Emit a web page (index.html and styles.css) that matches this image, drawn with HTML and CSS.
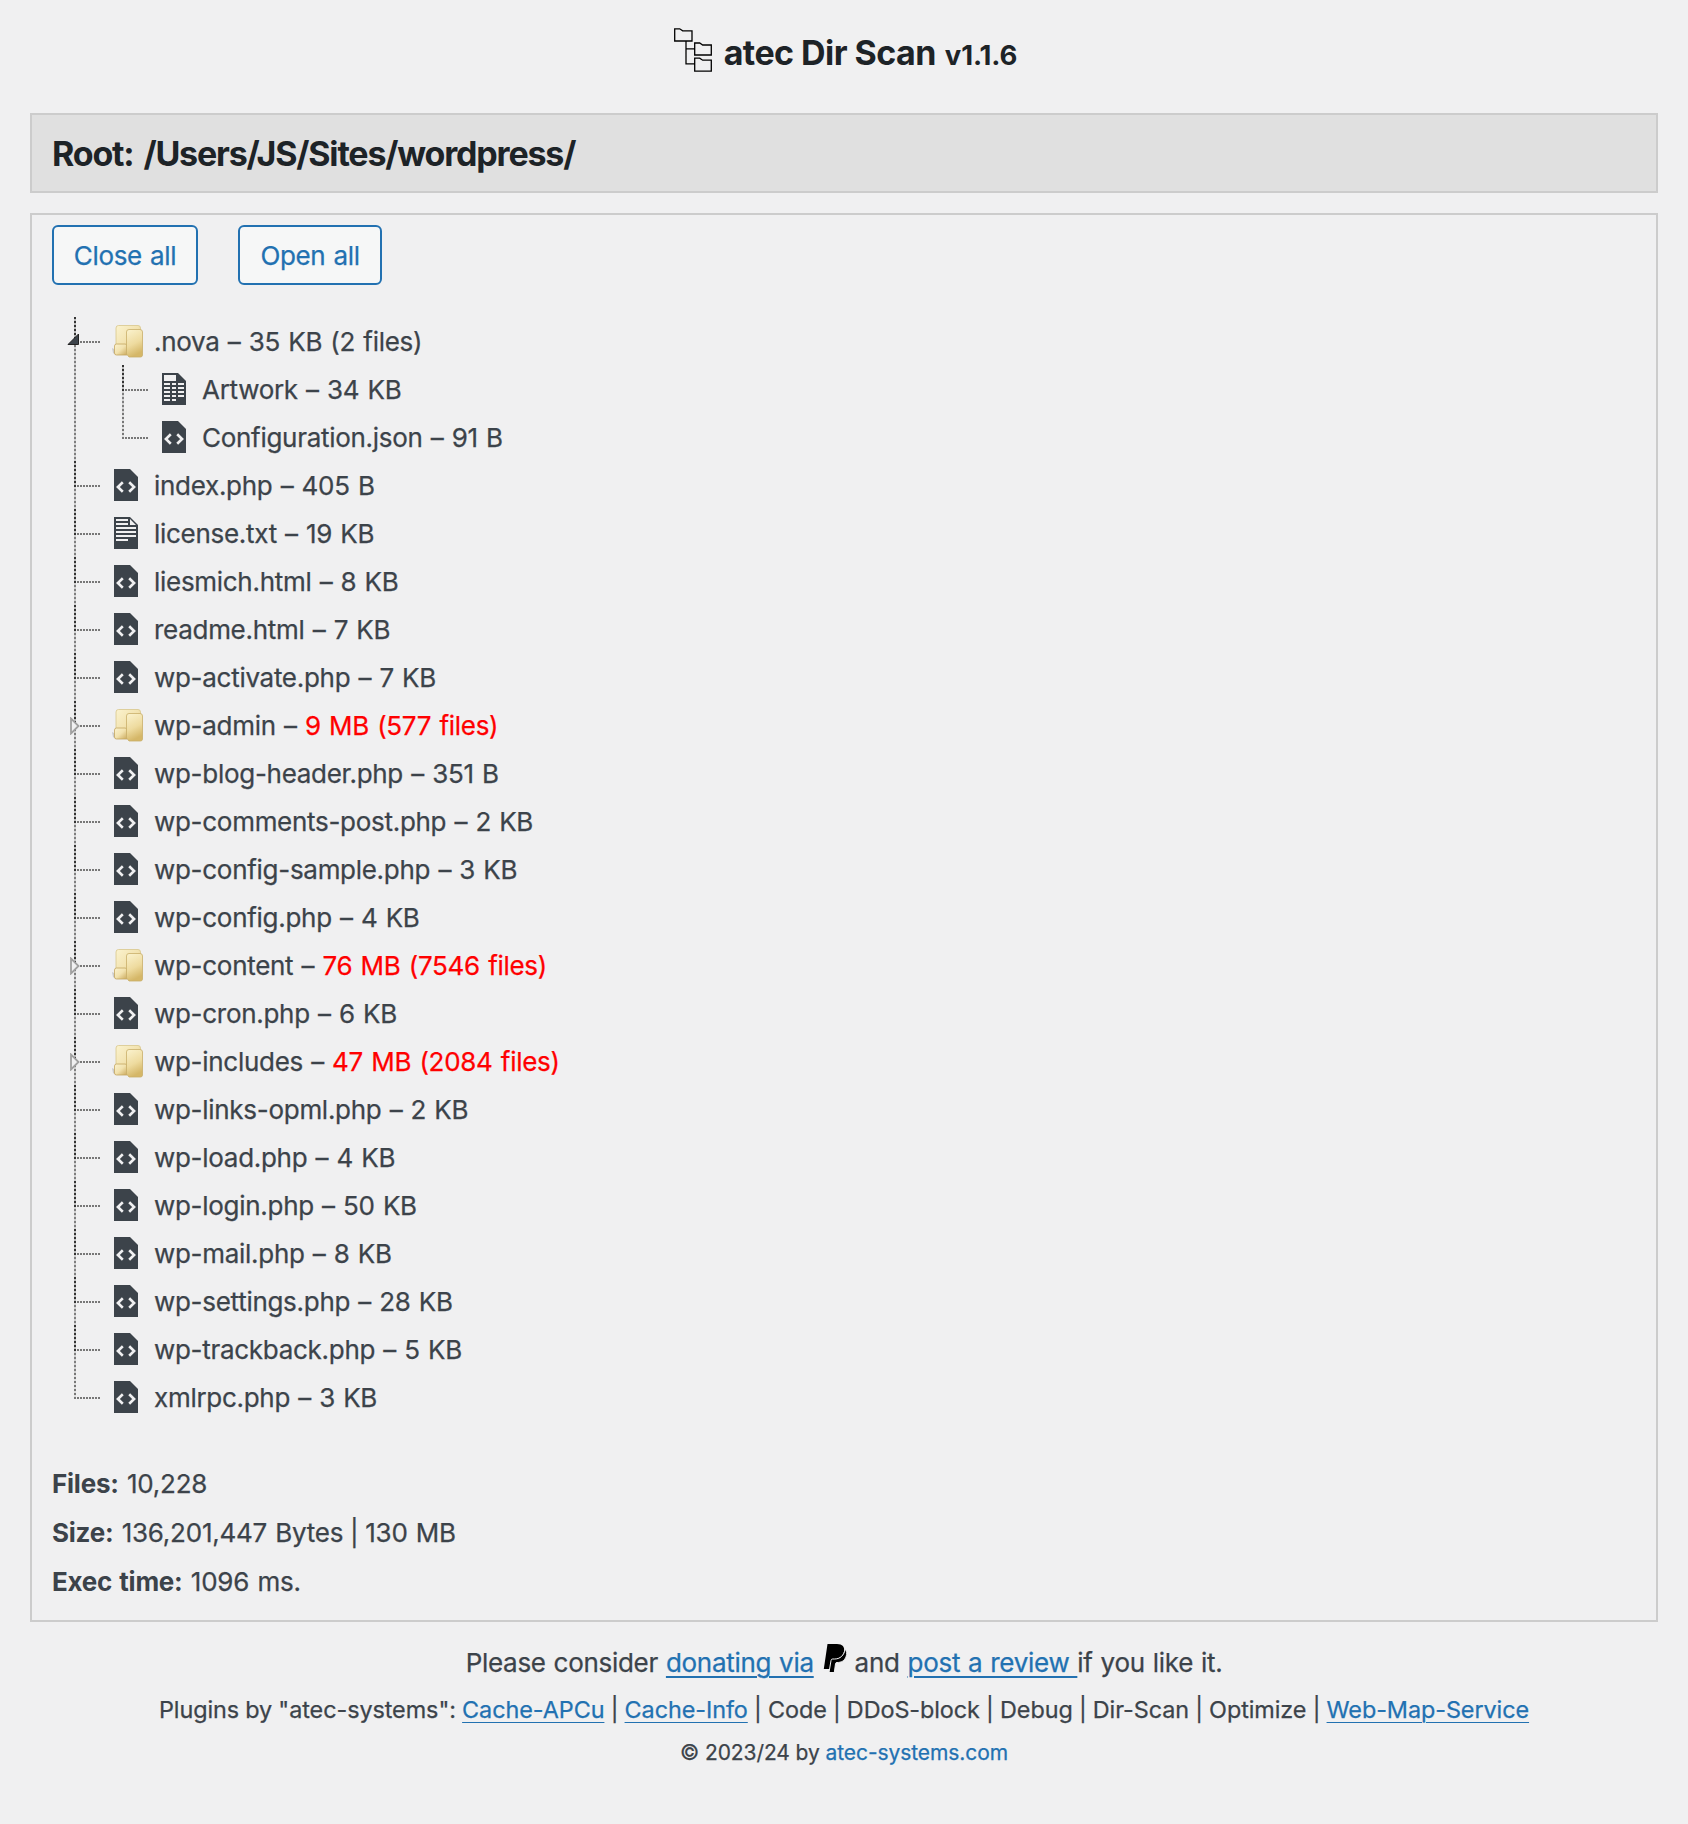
FILE: index.html
```html
<!DOCTYPE html>
<html lang="en">
<head>
<meta charset="utf-8">
<title>atec Dir Scan</title>
<link rel="stylesheet" href="styles.css">
</head>
<body>
<svg class="defs" width="0" height="0" aria-hidden="true">
  <defs>
    <linearGradient id="gold" x1="0" y1="0" x2="1" y2="1"><stop offset="0" stop-color="#fbf3cf"/><stop offset=".5" stop-color="#f2e2ae"/><stop offset="1" stop-color="#cba95c"/></linearGradient>
    <linearGradient id="goldfront" x1="0" y1="0" x2="0.3" y2="1"><stop offset="0" stop-color="#fbf3cf"/><stop offset=".6" stop-color="#eedb9f"/><stop offset="1" stop-color="#d5b768"/></linearGradient>
    <symbol id="code" viewBox="0 0 24 32"><path fill="#3c434a" d="M0 0h16l8 8v24H0z"/><path fill="none" stroke="#f0f0f1" stroke-width="2.600" d="M8.800 13.200 3.900 18l4.900 4.800M15.200 13.200l4.900 4.800-4.900 4.800"/></symbol>
    <symbol id="text" viewBox="0 0 24 32"><path fill="#3c434a" d="M0 0h16l8 8v24H0z"/><path fill="#f0f0f1" d="M2 2h12v2H2zM2 6h12v2H2zM2 10h20v2H2zM2 14h20v2H2zM2 18h20v2H2zM2 22h12v2H2zM16 2l6 6h-6z"/></symbol>
    <symbol id="sheet" viewBox="0 0 24 32"><path fill="#3c434a" d="M0 0h16l8 8v24H0z"/><path fill="#f0f0f1" d="M2 2h12v6H2zM2 10h6v2H2zM10 10h4v2h-4zM16 10h6v2h-6zM2 14h6v2H2zM10 14h4v2h-4zM16 14h6v2h-6zM2 18h6v2H2zM10 18h4v2h-4zM16 18h6v2h-6zM2 22h6v2H2zM10 22h4v2h-4zM16 22h6v2h-6zM2 26h6v2H2zM10 26h4v2h-4z"/></symbol>
    <symbol id="folder" viewBox="0 0 32 34"><path fill="#a0a0a0" opacity=".45" d="M0 24l4 2v5l-3-2z"/><path fill="url(#gold)" stroke="#d8c68c" stroke-width=".8" d="M4 4q0-2.500 2.500-2.500H26Q28.500 1.500 28.500 4v25H4z"/><path fill="url(#gold)" stroke="#c4a661" stroke-width=".8" d="M2.500 22q0-2 2-2H13q2 0 2 2v9H4.500q-2 0-2-2z"/><path fill="url(#goldfront)" stroke="#c9ae6a" stroke-width=".8" d="M14.500 8q0-2.500 2.500-2.500h11q2.500 0 2.500 2.500v23q0 2-2 2H17l-2.500-3z"/></symbol>
  </defs>
</svg>
<header class="header">
  <svg class="logo" viewBox="0 0 38 44" fill="none" stroke="#000" stroke-width="1.300"><path d="M.7.8h5l3 2h9.300v10.200H.7zM20.700 15h5l3 2h8.600v10H20.700zM20.700 30.200h5l3 2h8.600v11H20.700zM12 13v22.800h8.700M12 20.800h8.700"/></svg>
  <h1 class="title">atec Dir Scan</h1><span class="version">v1.1.6</span>
</header>
<section class="root"><h2 class="path">Root: /Users/JS/Sites/wordpress/</h2></section>
<main class="panel">
  <div class="buttons"><button class="button">Close all</button><button class="button">Open all</button></div>
  <ul class="tree">
    <li class="node"><div class="row"><svg class="toggle"><path fill="#3c434a" stroke="#222" d="M11.500 1v10.500H1z"/></svg><svg class="folder"><use href="#folder"/></svg><span>.nova – 35 KB (2 files)</span></div>
      <ul class="tree nested">
        <li class="node"><div class="row"><svg class="file"><use href="#sheet"/></svg><span>Artwork – 34 KB</span></div></li>
        <li class="node"><div class="row"><svg class="file"><use href="#code"/></svg><span>Configuration.json – 91 B</span></div></li>
      </ul>
    </li>
    <li class="node"><div class="row"><svg class="file"><use href="#code"/></svg><span>index.php – 405 B</span></div></li>
    <li class="node"><div class="row"><svg class="file"><use href="#text"/></svg><span>license.txt – 19 KB</span></div></li>
    <li class="node"><div class="row"><svg class="file"><use href="#code"/></svg><span>liesmich.html – 8 KB</span></div></li>
    <li class="node"><div class="row"><svg class="file"><use href="#code"/></svg><span>readme.html – 7 KB</span></div></li>
    <li class="node"><div class="row"><svg class="file"><use href="#code"/></svg><span>wp-activate.php – 7 KB</span></div></li>
    <li class="node"><div class="row"><svg class="toggle closed"><path fill="#f0f0f1" stroke="#a0a0a0" stroke-width="1.800" d="M1 1.500v15l7.500-7.500z"/></svg><svg class="folder"><use href="#folder"/></svg><span>wp-admin – <span class="large">9 MB (577 files)</span></span></div></li>
    <li class="node"><div class="row"><svg class="file"><use href="#code"/></svg><span>wp-blog-header.php – 351 B</span></div></li>
    <li class="node"><div class="row"><svg class="file"><use href="#code"/></svg><span>wp-comments-post.php – 2 KB</span></div></li>
    <li class="node"><div class="row"><svg class="file"><use href="#code"/></svg><span>wp-config-sample.php – 3 KB</span></div></li>
    <li class="node"><div class="row"><svg class="file"><use href="#code"/></svg><span>wp-config.php – 4 KB</span></div></li>
    <li class="node"><div class="row"><svg class="toggle closed"><path fill="#f0f0f1" stroke="#a0a0a0" stroke-width="1.800" d="M1 1.500v15l7.500-7.500z"/></svg><svg class="folder"><use href="#folder"/></svg><span>wp-content – <span class="large">76 MB (7546 files)</span></span></div></li>
    <li class="node"><div class="row"><svg class="file"><use href="#code"/></svg><span>wp-cron.php – 6 KB</span></div></li>
    <li class="node"><div class="row"><svg class="toggle closed"><path fill="#f0f0f1" stroke="#a0a0a0" stroke-width="1.800" d="M1 1.500v15l7.500-7.500z"/></svg><svg class="folder"><use href="#folder"/></svg><span>wp-includes – <span class="large">47 MB (2084 files)</span></span></div></li>
    <li class="node"><div class="row"><svg class="file"><use href="#code"/></svg><span>wp-links-opml.php – 2 KB</span></div></li>
    <li class="node"><div class="row"><svg class="file"><use href="#code"/></svg><span>wp-load.php – 4 KB</span></div></li>
    <li class="node"><div class="row"><svg class="file"><use href="#code"/></svg><span>wp-login.php – 50 KB</span></div></li>
    <li class="node"><div class="row"><svg class="file"><use href="#code"/></svg><span>wp-mail.php – 8 KB</span></div></li>
    <li class="node"><div class="row"><svg class="file"><use href="#code"/></svg><span>wp-settings.php – 28 KB</span></div></li>
    <li class="node"><div class="row"><svg class="file"><use href="#code"/></svg><span>wp-trackback.php – 5 KB</span></div></li>
    <li class="node"><div class="row"><svg class="file"><use href="#code"/></svg><span>xmlrpc.php – 3 KB</span></div></li>
  </ul>
  <div class="stats">
    <p><b>Files:</b> 10,228</p>
    <p><b>Size:</b> 136,201,447 Bytes <span class="bar">|</span> 130 MB</p>
    <p><b>Exec time:</b> 1096 ms.</p>
  </div>
</main>
<footer class="footer">
  <p class="donate">Please consider <a href="#">donating via</a> <svg class="paypal" viewBox="0 0 24 28"><path d="M4.500 0H14c5.500 0 8 3 7 7.500-1.200 5.500-5 7.500-9.500 7.500H9.800q-1 0-1.300 1.500L7 25H.8z"/><path stroke="#f0f0f1" stroke-width="1" d="M22.200 5.200c1.800 2 1.800 5 1 7-1.500 4.800-5 6.300-9.200 6.300q-1.300 0-1.500 1.300L11.300 28.500H6L8 16.500q.3-1.500 1.500-1.500h2.200c5.300 0 9.300-3.500 10.500-9.800z"/></svg> and <a href="#">post a review </a>if you like it.</p>
  <p class="plugins">Plugins by "atec-systems": <a href="#">Cache-APCu</a> | <a href="#">Cache-Info</a> | Code | DDoS-block | Debug | Dir-Scan | Optimize | <a href="#">Web-Map-Service</a></p>
  <p class="copyright">© 2023/24 by <a href="#">atec-systems.com</a></p>
</footer>
</body>
</html>
```
FILE: styles.css
```css
* { box-sizing: border-box; }
body { margin: 0; padding: 0 30px; background: #f0f0f1; color: #3c434a; font: 400 26px/48px Inter, sans-serif; letter-spacing: -0.29px; word-spacing: 1.2px; -webkit-text-stroke: 0.25px; }
h1, h2, p, ul { margin: 0; padding: 0; }
.defs { position: absolute; }
a { color: #2271b1; text-decoration: underline; text-underline-offset: 4px; text-decoration-thickness: 2px; }
.header { height: 113px; display: flex; justify-content: center; align-items: baseline; padding: 28px 0 0 3px; color: #1d2327; word-spacing: 0; -webkit-text-stroke: 0; }
.logo { width: 38px; height: 44px; align-self: flex-start; margin-right: 12px; }
.title { font-size: 34px; line-height: 50px; font-weight: 650; letter-spacing: -0.55px; }
.version { font-size: 27.500px; margin-left: 9px; font-weight: 650; letter-spacing: -0.1px; }
.root { height: 80px; border: 2px solid #ccc; background: #e0e0e0; padding: 14px 20px; }
.path { font-size: 34px; line-height: 50px; font-weight: 650; letter-spacing: -1.18px; word-spacing: 3px; color: #1d2327; -webkit-text-stroke: 0; }
.panel { height: 1409px; margin-top: 20px; border: 2px solid #ccc; padding: 10px 20px; }
.buttons { display: flex; gap: 40px; }
.button { width: 146px; height: 60px; padding: 2px 0 0; border: 2px solid #2271b1; border-radius: 6px; background: #f6f7f7; color: #2271b1; font: inherit; letter-spacing: -0.35px; word-spacing: inherit; }
.button + .button { width: 144px; }
.tree { list-style: none; margin: 33px 0 0 22px; }
.nested { margin: 0 0 0 8px; }
.node { position: relative; padding-left: 40px; }
.node::before { content: ""; position: absolute; left: 0; top: -1px; bottom: 0; width: 2px; background: linear-gradient(transparent 26px, rgba(240, 240, 241, .4) 26px), repeating-linear-gradient(#333 0 2px, #bbb 2px 4px); }
.node:last-child::before { bottom: auto; height: 26px; background: repeating-linear-gradient(#777 0 2px, #ddd 2px 4px); }
.row { display: flex; align-items: center; height: 48px; white-space: nowrap; }
.row::before { content: ""; position: absolute; left: 2px; top: 23px; width: 24px; height: 2px; background: repeating-linear-gradient(90deg, transparent 0 1px, #777 1px 3px); }
.file { width: 24px; height: 32px; margin: 0 16px 2px 0; flex: none; }
.folder { width: 32px; height: 34px; margin: 0 10px 2px -2px; flex: none; overflow: visible; }
.toggle { position: absolute; left: -7px; top: 15px; width: 13px; height: 13px; }
.closed { left: -4px; top: 15px; width: 11px; height: 18px; }
.large { color: #f00; }
.stats { margin-top: 37px; line-height: 49px; letter-spacing: -0.24px; }
.stats b { font-weight: 650; -webkit-text-stroke: 0; }
.bar { margin: 0 -1.500px; }
.footer { text-align: center; white-space: nowrap; padding-top: 17px; }
.donate { word-spacing: 0.9px; }
.paypal { width: 24px; height: 28px; margin-left: 1px; }
.plugins { font-size: 23.4px; line-height: 46px; letter-spacing: -0.07px; word-spacing: -0.3px; }
.plugins a { text-decoration-thickness: 1px; }
.copyright { font-size: 21px; line-height: 39px; letter-spacing: -0.08px; word-spacing: 0; }
.copyright a { text-decoration: none; }
```
